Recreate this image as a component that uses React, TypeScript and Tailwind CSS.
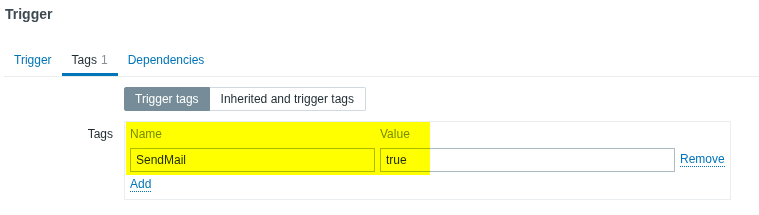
import React from 'react';

const tabs = [
  { label: 'Trigger', active: false },
  { label: 'Tags', count: 1, active: true },
  { label: 'Dependencies', active: false },
];

export default function App() {
  return (
    <div className="relative w-[759px] h-[215px] bg-white text-[12px] text-[#1f2c33] font-['Liberation_Sans',Arial,sans-serif] overflow-hidden">
      <h1 className="pl-[5px] pt-[6px] text-[14px] leading-[17px] font-bold text-[#3e4a52]">Trigger</h1>

      {/* tabs */}
      <div className="ml-[4px] mt-[26px] flex border-b border-[#ebeef0]">
        {tabs.map((t) => (
          <div
            key={t.label}
            className={`px-[10px] pt-[4px] pb-[6px] leading-[14px] border-b-[3px] ${
              t.active ? 'border-[#0275b8] text-[#1f2c33]' : 'border-transparent text-[#0275b8]'
            }`}
          >
            {t.label}
            {t.count !== undefined && <span className="ml-[4px] text-[#8a8f94]">{t.count}</span>}
          </div>
        ))}
      </div>

      {/* form */}
      <div className="mt-[10px] flex flex-col gap-[10px]">
        <div className="flex">
          <div className="w-[124px]" />
          <div className="flex h-[24px]">
            <div className="px-[10px] flex items-center bg-[#768d99] text-white rounded-l-[2px] border border-[#768d99]">
              Trigger tags
            </div>
            <div className="px-[11px] flex items-center bg-white border border-l-0 border-[#cfd9df] rounded-r-[2px]">
              Inherited and trigger tags
            </div>
          </div>
        </div>

        <div className="flex">
          <div className="w-[124px] pr-[11px] pt-[4px] text-right">Tags</div>
          <div className="relative w-[607px] h-[79px] border border-[#ebeef0] px-[5px] pt-[5px]">
            <div className="flex text-[#768d99] leading-[14px]">
              <div className="w-[250px]">Name</div>
              <div>Value</div>
            </div>
            <div className="mt-[7px] flex items-center">
              <div className="w-[245px] h-[24px] border border-[#acbbc2] px-[5px] flex items-center">SendMail</div>
              <div className="ml-[5px] w-[295px] h-[24px] border border-[#acbbc2] px-[5px] flex items-center">true</div>
              <span className="ml-[5px] text-[#0275b8] border-b border-dotted border-[#0275b8] leading-[13px]">Remove</span>
            </div>
            <div className="mt-[3px]">
              <span className="text-[#0275b8] border-b border-dotted border-[#0275b8] leading-[13px]">Add</span>
            </div>
          </div>
        </div>
      </div>

      {/* highlight marker over the first tag row */}
      <div className="absolute left-[126px] top-[122px] w-[304px] h-[53px] bg-[#ffff00] mix-blend-multiply pointer-events-none" />
    </div>
  );
}
